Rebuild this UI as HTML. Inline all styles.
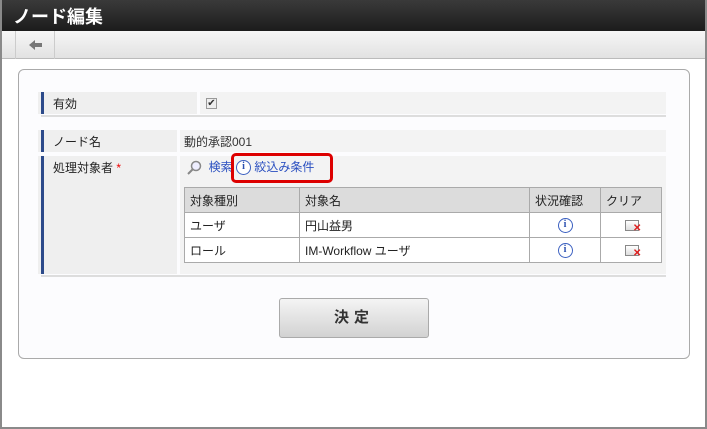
<!DOCTYPE html>
<html><head><meta charset="utf-8"><style>
*{margin:0;padding:0;box-sizing:border-box}
body{width:707px;height:429px;overflow:hidden;background:#fff;font-family:"Liberation Sans","Noto Sans CJK JP",sans-serif;font-size:12px;color:#333;position:relative}
.frame{position:absolute;left:0;top:0;width:707px;height:429px;border:2px solid #8a8a8a;border-top:none}
.title{position:absolute;left:2px;top:0;width:703px;height:31px;background:linear-gradient(#3a3a3a,#1c1c1c);color:#fff;font-size:18px;font-weight:bold;padding:3px 0 0 11px}
.tool{position:absolute;left:2px;top:31px;width:703px;height:28px;background:linear-gradient(#f6f6f6,#e2e2e2);border-bottom:1px solid #bbb}
.back{position:absolute;left:13px;top:0;width:40px;height:28px;border-left:1px solid #ccc;border-right:1px solid #ccc}
.panel{position:absolute;left:18px;top:69px;width:672px;height:290px;border:1px solid #aaa;border-radius:6px;background:#fcfcfe}
.lab{position:absolute;background:#efefef;border-left:3px solid #2c4a8a;padding:3px 0 0 9px;font-size:12px;color:#222;box-shadow:-3px 0 0 #efefef}
.val{position:absolute;background:#f3f3f3;padding:3px 0 0 4px;color:#333}
.ln{position:absolute;height:2px;background:#ddd}
table{position:absolute;left:184px;top:187px;width:478px;border-collapse:collapse;background:#fff}
td,th{border:1px solid #aaa;height:25px;padding:0 5px;text-align:left;font-weight:normal;font-size:12px;color:#222}
th{background:#dcdcdc}
.ic{display:inline-block;width:15px;height:15px;border-radius:50%;border:1.5px solid #3a5fc0;color:#2a4fb0;font-size:10px;font-weight:bold;text-align:center;line-height:12px;font-family:"Liberation Serif",serif;background:#fff;vertical-align:middle}
.clr{display:inline-block;width:14px;height:11px;border:1px solid #888;background:linear-gradient(#fff,#ddd);position:relative;vertical-align:middle;margin-left:2px}
.clr:after{content:"✕";position:absolute;left:7px;top:3px;color:#e02020;font-size:10px;font-weight:bold;line-height:10px}
.btn{position:absolute;left:279px;top:298px;width:150px;height:40px;border:1px solid #aaa;border-radius:3px;background:linear-gradient(#f4f4f4,#d2d2d2);text-align:center;line-height:38px;font-size:15px;font-weight:bold;letter-spacing:5px;color:#333}
</style></head><body>
<div class="frame"></div>
<div class="title">ノード編集</div>
<div class="tool"><div class="back"><svg width="40" height="28"><path d="M13 14 L19 9 L19 12 L26 12 L26 16 L19 16 L19 19 Z" fill="#777"/></svg></div></div>
<div class="panel"></div>
<div class="lab" style="left:41px;top:92px;width:156px;height:22px">有効</div>
<div class="val" style="left:200px;top:92px;width:466px;height:22px"><span style="display:inline-block;width:11px;height:11px;border:1px solid #999;background:#eee;font-size:10px;line-height:9px;text-align:center;margin:2px 0 0 2px">✔</span></div>
<div class="ln" style="left:41px;top:115px;width:625px"></div>
<div class="lab" style="left:41px;top:130px;width:136px;height:22px">ノード名</div>
<div class="val" style="left:180px;top:130px;width:486px;height:22px">動的承認001</div>
<div class="lab" style="left:41px;top:156px;width:136px;height:118px">処理対象者 <span style="color:#e00">*</span></div>
<div class="val" style="left:180px;top:156px;width:486px;height:118px"></div>
<div class="ln" style="left:41px;top:275px;width:625px"></div>
<div style="position:absolute;left:186px;top:159px;color:#2a4fc0;font-size:12px;white-space:nowrap;line-height:16px">
<svg width="16" height="16" style="vertical-align:middle"><circle cx="10" cy="6" r="4.5" fill="#eef" stroke="#888" stroke-width="1.5"/><path d="M7 9 L2 14" stroke="#888" stroke-width="2"/></svg>&nbsp; 検索 <span class="ic">i</span>&nbsp;絞込み条件</div>
<div style="position:absolute;left:231px;top:153px;width:102px;height:30px;border:3px solid #d00;border-radius:5px"></div>
<table>
<tr><th style="width:115px">対象種別</th><th style="width:230px">対象名</th><th style="width:71px">状況確認</th><th>クリア</th></tr>
<tr><td>ユーザ</td><td>円山益男</td><td style="text-align:center"><span class="ic">i</span></td><td style="text-align:center"><span class="clr"></span></td></tr>
<tr><td>ロール</td><td>IM-Workflow ユーザ</td><td style="text-align:center"><span class="ic">i</span></td><td style="text-align:center"><span class="clr"></span></td></tr>
</table>
<div class="btn">決定</div>
</body></html>
